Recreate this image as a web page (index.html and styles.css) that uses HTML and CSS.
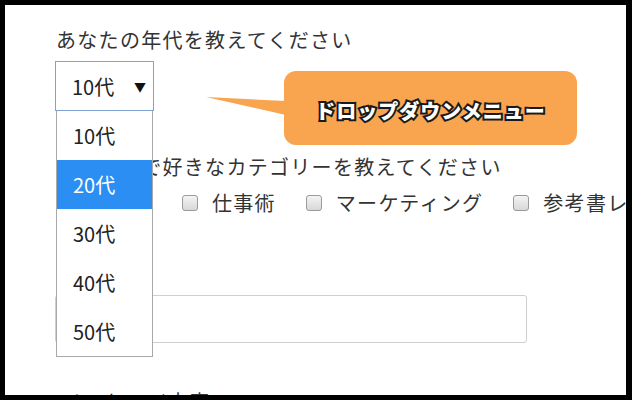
FILE: index.html
```html
<!DOCTYPE html>
<html lang="ja">
<head>
<meta charset="utf-8">
<link rel="stylesheet" href="styles.css">
</head>
<body>
<div class="frame">
  <div class="content">
    <div class="label first">あなたの年代を教えてください</div>
    <div class="select"><span>10代</span><span class="arrow">▼</span></div>
    <div class="label second">ビジネスで好きなカテゴリーを教えてください</div>
    <div class="checks">
      <label class="check"><span class="box"></span>経営学</label>
      <label class="check"><span class="box"></span>仕事術</label>
      <label class="check"><span class="box"></span>マーケティング</label>
      <label class="check"><span class="box"></span>参考書レビュー</label>
    </div>
    <div class="label third">お名前</div>
    <div class="input"></div>
    <div class="label fourth">メッセージ内容</div>
  </div>

  <ul class="options">
    <li>10代</li>
    <li class="active">20代</li>
    <li>30代</li>
    <li>40代</li>
    <li>50代</li>
  </ul>

  <div class="callout">
    <svg class="tail" width="80" height="20" viewBox="0 0 80 20"><polygon points="0,0 80,4 80,18" fill="#f9a54f"/></svg>
    <span class="callout-text">ドロップダウンメニュー</span>
  </div>
</div>
</body>
</html>
```

FILE: styles.css
```css
* { box-sizing: border-box; }
html, body { margin: 0; padding: 0; background: #000; }
body { width: 632px; height: 400px; overflow: hidden; }

.frame {
  position: relative;
  margin: 5px 6px 0 5px;
  height: 390px;
  background: #fff;
  overflow: hidden;
  font-family: "Noto Sans CJK JP", "Noto Sans", sans-serif;
  color: #333;
}

.content {
  padding-left: 50px;
}

.label {
  font-size: 20px;
  letter-spacing: 1.3px;
  line-height: 26px;
  padding-left: 1px;
  white-space: nowrap;
}
.label.first { padding-top: 22px; }

.select {
  margin-top: 8px;
  width: 99px;
  height: 50px;
  border: 1px solid #7fa4d2;
  display: flex;
  align-items: center;
  justify-content: space-between;
  padding: 0 7px 0 16px;
  font-size: 20px;
  color: #222;
}
.select .arrow { font-size: 12px; color: #111; }

.label.second { margin-top: 43px; }

.checks {
  margin-top: 10px;
  height: 26px;
  display: flex;
  align-items: center;
  gap: 30px;
  padding-left: 3px;
  white-space: nowrap;
}
.check {
  display: flex;
  align-items: center;
  gap: 14px;
  font-size: 20px;
  letter-spacing: 1.3px;
  line-height: 26px;
}
.box {
  width: 16px;
  height: 16px;
  border: 1px solid #9a9a9a;
  border-radius: 3px;
  background: linear-gradient(#f4f4f4, #d8d8d8);
  flex: none;
}

.label.third { margin-top: 42px; }

.input {
  margin-top: 11px;
  width: 472px;
  height: 48px;
  border: 1px solid #cfcfcf;
  border-radius: 3px;
}

.label.fourth { margin-top: 46px; padding-left: 7px; }

.options {
  position: absolute;
  left: 51px;
  top: 106px;
  width: 97px;
  height: 246px;
  margin: 0;
  padding: 0;
  list-style: none;
  background: #fff;
  border: 1px solid #a9a9a9;
  border-top: none;
}
.options li {
  height: 49px;
  line-height: 49px;
  padding-left: 16px;
  font-size: 20px;
  color: #222;
}
.options li.active {
  background: #2a8ef2;
  color: #fff;
}

.callout {
  position: absolute;
  left: 279px;
  top: 66px;
  width: 293px;
  height: 74px;
  background: #f9a54f;
  border-radius: 12px;
  display: flex;
  align-items: center;
  justify-content: center;
  padding-top: 5px;
}
.tail {
  position: absolute;
  left: -78px;
  top: 26px;
}
.callout-text {
  font-size: 20px;
  font-weight: 900;
  color: #fff;
  letter-spacing: 1px;
  -webkit-text-stroke: 4px #1a1a1a;
  paint-order: stroke fill;
}
```
